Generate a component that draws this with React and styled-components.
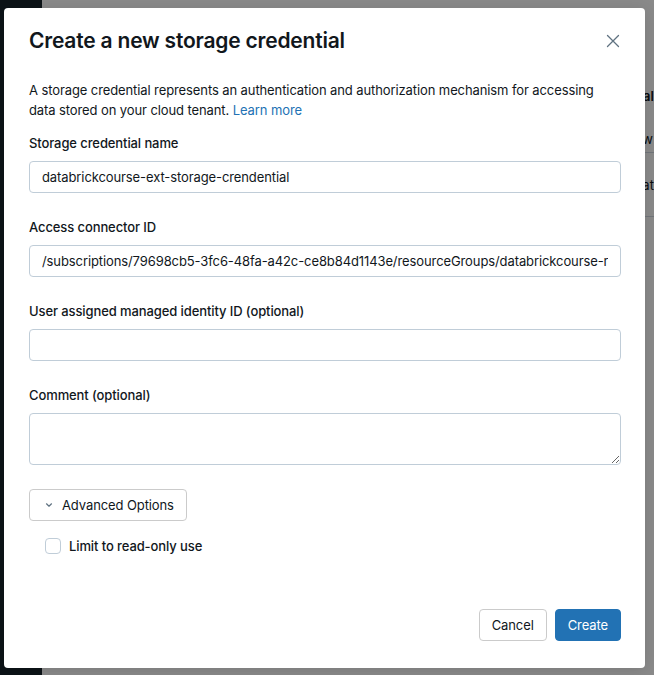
import React from "react";
import styled, { createGlobalStyle } from "styled-components";

const Global = createGlobalStyle`
  html, body { margin: 0; padding: 0; }
  body { font-family: Inter, "Noto Sans", "Liberation Sans", sans-serif; -webkit-font-smoothing: antialiased; }
  * { box-sizing: border-box; }
`;

const Page = styled.div`
  position: relative;
  width: 654px;
  height: 675px;
  display: flex;
  overflow: hidden;
  background: #ffffff;
`;

const Sidebar = styled.div`
  width: 45px;
  background: #17242b;
`;

const Main = styled.div`
  flex: 1;
  display: flex;
  flex-direction: column;
  font-size: 13px;
  color: #11171c;
`;

const BgRow = styled.div`
  height: ${(p) => p.$h}px;
  display: flex;
  align-items: ${(p) => (p.$end ? "flex-end" : "center")};
  padding-bottom: ${(p) => (p.$end ? 20 : 0)}px;
  padding-left: ${(p) => p.$x - 45}px;
  white-space: nowrap;
  border-bottom: 1px solid ${(p) => (p.$line ? "#d1d9e1" : "transparent")};
  font-weight: ${(p) => (p.$bold ? 600 : 400)};
`;

const Overlay = styled.div`
  position: absolute;
  inset: 0;
  background: rgba(0, 0, 0, 0.46);
`;

const Modal = styled.div`
  position: absolute;
  left: 4px;
  top: 8px;
  width: 641px;
  height: 660px;
  background: #ffffff;
  border-radius: 4px;
  box-shadow: 0 2px 16px rgba(0, 0, 0, 0.12);
  display: flex;
  flex-direction: column;
  padding: 19px 24px 27px 25px;
  color: #11171c;
  letter-spacing: -0.1px;
`;

const Header = styled.div`
  display: flex;
  align-items: center;
  justify-content: space-between;
  height: 28px;
`;

const Title = styled.h2`
  margin: 0;
  font-size: 21px;
  font-weight: 600;
  line-height: 28px;
  letter-spacing: -0.2px;
`;

const CloseBtn = styled.button`
  border: none;
  background: none;
  padding: 0;
  width: 24px;
  height: 24px;
  margin-right: -4px;
  display: flex;
  align-items: center;
  justify-content: center;
  color: #5f7281;
`;

const Desc = styled.p`
  margin: 25px 0 0;
  font-size: 13px;
  line-height: 20px;
`;

const Link = styled.a`
  color: #2272b4;
  text-decoration: none;
`;

const Field = styled.div`
  display: flex;
  flex-direction: column;
  gap: 8px;
  margin-top: ${(p) => p.$mt}px;
`;

const Label = styled.label`
  font-size: 13px;
  line-height: 20px;
  font-weight: 550;
`;

const Input = styled.input`
  width: 100%;
  height: 32px;
  border: 1px solid #c0cdd8;
  border-radius: 4px;
  padding: 0 12px;
  font-family: inherit;
  font-size: 13px;
  letter-spacing: -0.1px;
  color: #11171c;
  outline: none;
`;

const TextArea = styled.textarea`
  width: 100%;
  height: 52px;
  border: 1px solid #c0cdd8;
  border-radius: 4px;
  padding: 6px 12px;
  font-family: inherit;
  font-size: 13px;
  resize: vertical;
  outline: none;
  display: block;
`;

const AdvButton = styled.button`
  align-self: flex-start;
  margin-top: 24px;
  height: 32px;
  padding: 0 12px 0 15px;
  display: flex;
  align-items: center;
  gap: 9px;
  border: 1px solid #cbcbcb;
  border-radius: 4px;
  background: #fff;
  font-family: inherit;
  font-size: 13px;
  letter-spacing: -0.1px;
  color: #11171c;
`;

const CheckRow = styled.label`
  margin-top: 15px;
  margin-left: 16px;
  display: flex;
  align-items: center;
  gap: 8px;
  font-size: 13px;
  line-height: 20px;
  font-weight: 550;
`;

const Box = styled.span`
  width: 16px;
  height: 16px;
  border: 1px solid #c0cdd8;
  border-radius: 4px;
  background: #fff;
`;

const Footer = styled.div`
  margin-top: auto;
  display: flex;
  justify-content: flex-end;
  gap: 8px;
`;

const Btn = styled.button`
  height: 32px;
  padding: 0 12px;
  border-radius: 4px;
  font-family: inherit;
  font-size: 13px;
  letter-spacing: -0.1px;
  border: 1px solid ${(p) => (p.$primary ? "#2272b4" : "#cbcbcb")};
  background: ${(p) => (p.$primary ? "#2272b4" : "#fff")};
  color: ${(p) => (p.$primary ? "#fff" : "#11171c")};
`;

export default function App() {
  return (
    <>
      <Global />
      <Page>
        <Sidebar />
        <Main>
          <BgRow $h={125} $x={626} $bold $end>Total</BgRow>
          <BgRow $h={28} $x={628} $line>Now</BgRow>
          <BgRow $h={64} $x={636} $line>Dat</BgRow>
        </Main>
        <Overlay />
        <Modal>
          <Header>
            <Title>Create a new storage credential</Title>
            <CloseBtn aria-label="Close">
              <svg width="14" height="14" viewBox="0 0 14 14" fill="none" stroke="currentColor" strokeWidth="1.3" strokeLinecap="round">
                <path d="M1.5 1.5 L12.5 12.5 M12.5 1.5 L1.5 12.5" />
              </svg>
            </CloseBtn>
          </Header>
          <Desc>
            A storage credential represents an authentication and authorization mechanism for accessing data stored on your cloud tenant.{" "}
            <Link href="#">Learn more</Link>
          </Desc>
          <Field $mt={13}>
            <Label>Storage credential name</Label>
            <Input defaultValue="databrickcourse-ext-storage-crendential" />
          </Field>
          <Field $mt={24}>
            <Label>Access connector ID</Label>
            <Input defaultValue="/subscriptions/79698cb5-3fc6-48fa-a42c-ce8b84d1143e/resourceGroups/databrickcourse-rg/providers/Microsoft.Databricks/accessConnectors/databrickcourse-ext-storage" />
          </Field>
          <Field $mt={24}>
            <Label>User assigned managed identity ID (optional)</Label>
            <Input defaultValue="" />
          </Field>
          <Field $mt={24}>
            <Label>Comment (optional)</Label>
            <TextArea defaultValue="" />
          </Field>
          <AdvButton>
            <svg width="8" height="8" viewBox="0 0 8 8" fill="none" stroke="#5f7281" strokeWidth="1.2" strokeLinecap="round" strokeLinejoin="round">
              <path d="M1.5 2.8 L4 5.2 L6.5 2.8" />
            </svg>
            Advanced Options
          </AdvButton>
          <CheckRow>
            <Box />
            Limit to read-only use
          </CheckRow>
          <Footer>
            <Btn>Cancel</Btn>
            <Btn $primary>Create</Btn>
          </Footer>
        </Modal>
      </Page>
    </>
  );
}
